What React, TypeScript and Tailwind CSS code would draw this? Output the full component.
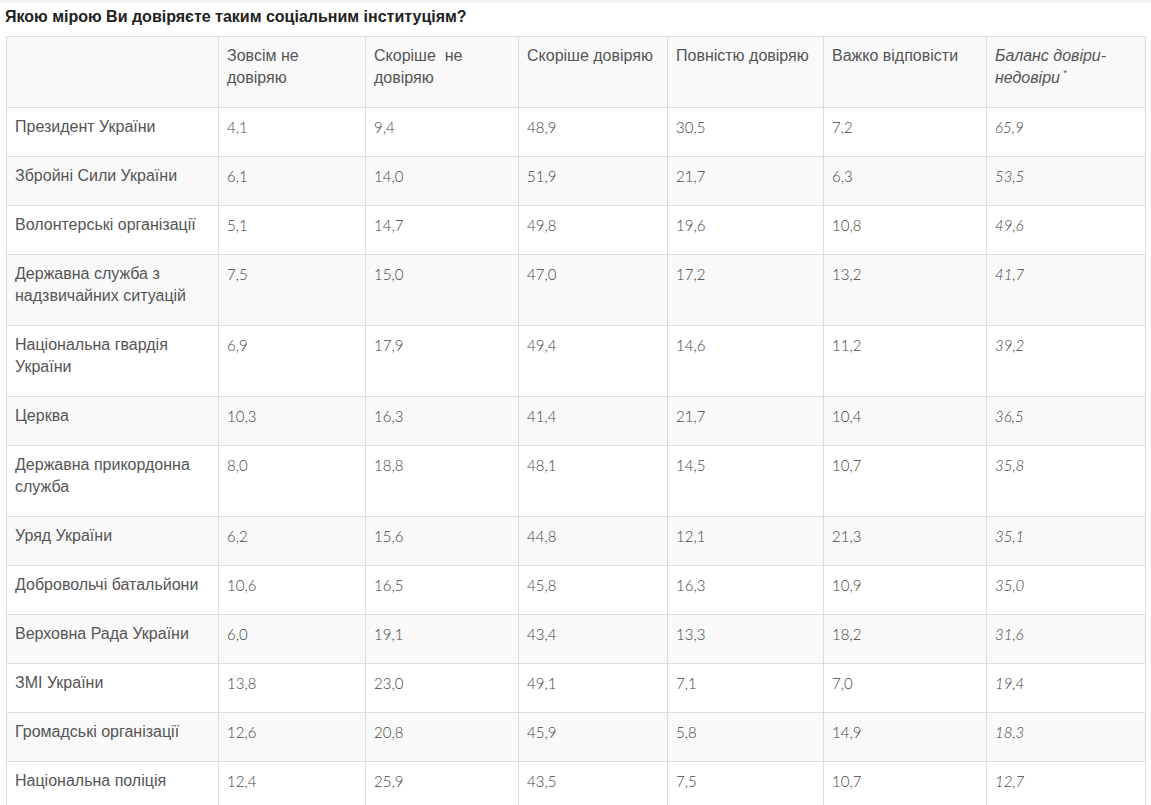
const header = [
  'Зовсім не довіряю',
  'Скоріше  не довіряю',
  'Скоріше довіряю',
  'Повністю довіряю',
  'Важко відповісти',
];

const rows: [string, string[]][] = [
  ['Президент України', ['4,1', '9,4', '48,9', '30,5', '7,2', '65,9']],
  ['Збройні Сили України', ['6,1', '14,0', '51,9', '21,7', '6,3', '53,5']],
  ['Волонтерські організації', ['5,1', '14,7', '49,8', '19,6', '10,8', '49,6']],
  ['Державна служба з надзвичайних ситуацій', ['7,5', '15,0', '47,0', '17,2', '13,2', '41,7']],
  ['Національна гвардія України', ['6,9', '17,9', '49,4', '14,6', '11,2', '39,2']],
  ['Церква', ['10,3', '16,3', '41,4', '21,7', '10,4', '36,5']],
  ['Державна прикордонна служба', ['8,0', '18,8', '48,1', '14,5', '10,7', '35,8']],
  ['Уряд України', ['6,2', '15,6', '44,8', '12,1', '21,3', '35,1']],
  ['Добровольчі батальйони', ['10,6', '16,5', '45,8', '16,3', '10,9', '35,0']],
  ['Верховна Рада України', ['6,0', '19,1', '43,4', '13,3', '18,2', '31,6']],
  ['ЗМІ України', ['13,8', '23,0', '49,1', '7,1', '7,0', '19,4']],
  ['Громадські організації', ['12,6', '20,8', '45,9', '5,8', '14,9', '18,3']],
  ['Національна поліція', ['12,4', '25,9', '43,5', '7,5', '10,7', '12,7']],
];

const cell = 'border border-[#dddddd] align-top pl-2 pr-2 pt-2 pb-[18px] leading-[22px]';
const num = "font-['Lato','Liberation_Sans',sans-serif] font-light text-[15px] text-[#444444]";

export default function App() {
  return (
    <div className="min-h-[805px] bg-white font-['Liberation_Sans',Arial,sans-serif] text-[16px] text-[#555555]">
      <div className="h-[3px] bg-[#f4f4f4]" />
      <h2 className="pl-[5px] pt-[5px] pb-[10px] text-[16px] font-bold leading-[18px] text-[#222222]">
        Якою мірою Ви довіряєте таким соціальним інституціям?
      </h2>
      <table className="ml-[6px] w-[1139px] table-fixed border-collapse">
        <colgroup>
          <col className="w-[212px]" />
          <col className="w-[147px]" />
          <col className="w-[153px]" />
          <col className="w-[149px]" />
          <col className="w-[156px]" />
          <col className="w-[163px]" />
          <col className="w-[159px]" />
        </colgroup>
        <thead>
          <tr className="bg-[#f9f9f9] text-left">
            <th className={`${cell} font-normal`} />
            {header.map((h) => (
              <th key={h} className={`${cell} font-normal whitespace-pre-wrap`}>
                {h}
              </th>
            ))}
            <th className={`${cell} font-normal italic`}>
              Баланс довіри-недовіри<span className="relative -top-[7px] ml-[3px] text-[9px] leading-none">*</span>
            </th>
          </tr>
        </thead>
        <tbody>
          {rows.map(([name, vals], i) => (
            <tr key={name} className={i % 2 === 1 ? 'bg-[#f9f9f9]' : 'bg-white'}>
              <td className={cell}>{name}</td>
              {vals.map((v, j) => (
                <td key={j} className={`${cell} ${num} ${j === 5 ? 'italic' : ''}`}>
                  {v}
                </td>
              ))}
            </tr>
          ))}
        </tbody>
      </table>
    </div>
  );
}
